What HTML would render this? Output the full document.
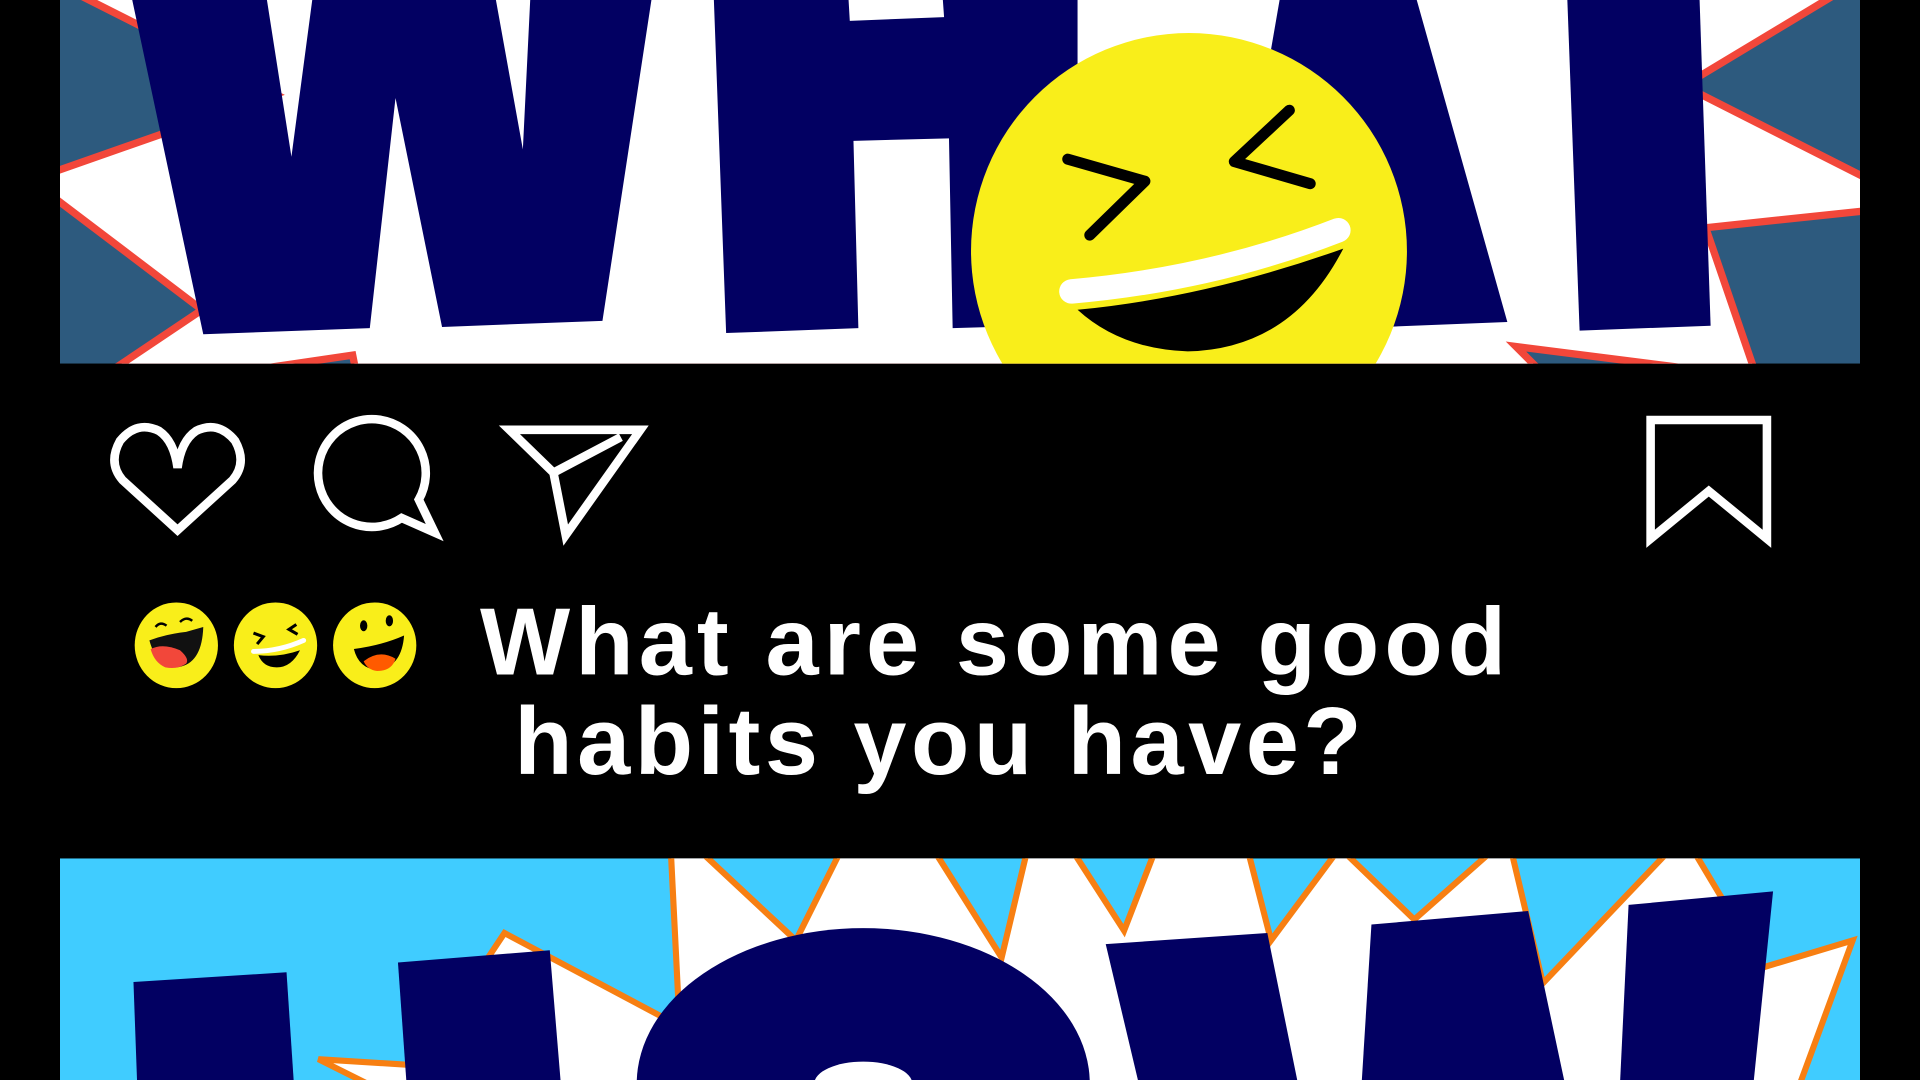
<!DOCTYPE html>
<html><head><meta charset="utf-8"><style>html,body{margin:0;padding:0;background:#000;overflow:hidden;width:1920px;height:1080px}svg{display:block}</style></head>
<body>
<svg width="1920" height="1080" viewBox="0 0 1568 882" preserveAspectRatio="none" xmlns="http://www.w3.org/2000/svg">
<defs>
<clipPath id="top"><rect x="49" y="0" width="1470" height="297"/></clipPath>
<clipPath id="bot"><rect x="49" y="701" width="1470" height="181"/></clipPath>
</defs>
<rect width="1568" height="882" fill="#000"/>
<g clip-path="url(#top)">
<rect x="49" y="0" width="1470" height="297" fill="#2d5a7e"/>
<polygon points="53,-10 1508,-10 1375,70 1525,146 1525,172 1393,186 1432,300 1372,300 1238,283 1255,300 290,300 288,290 220,300 95,300 165,253 45,162 45,140 225,77" fill="#fff" stroke="#f2473a" stroke-width="6" stroke-linejoin="miter"/>
<polygon points="108,0 218,0 238,128 255,0 405,0 427,122 433,0 532,0 492,262 361,267 323,80 302,268 166,273" fill="#020062"/>
<polygon points="583,0 693,0 694,17 771,14 770,0 880,0 880,265 778,268 775,113 697,115 701,268 593,272" fill="#020062"/>
<polygon points="1045,0 1157,0 1231,263 1130,267 1000,260" fill="#020062"/>
<polygon points="1280,0 1388,0 1397,266 1290,270" fill="#020062"/>
<circle cx="971" cy="205" r="178" fill="#f9ee1a"/>
<polyline points="872,130 935,148 890,192" fill="none" stroke="#000" stroke-width="9" stroke-linecap="round" stroke-linejoin="round"/>
<polyline points="1053,90 1008,132 1070,150" fill="none" stroke="#000" stroke-width="9" stroke-linecap="round" stroke-linejoin="round"/>
<path d="M880,253 Q985,243 1097,203 Q1055,285 970,287 Q915,285 880,253Z" fill="#000"/>
<path d="M875,238 Q990,228 1093,188" fill="none" stroke="#fff" stroke-width="20" stroke-linecap="round"/>
</g>
<!-- icons -->
<path d="M145,433 L100,392 Q88,378 98,360 Q112,343 130,352 Q142,360 145,382 Q148,360 160,352 Q178,343 192,360 Q202,378 190,392 Z" fill="none" stroke="#fff" stroke-width="7" stroke-linejoin="miter"/>
<path d="M328,423 A44,44 0 1 1 342,408 L355,435 Z" fill="none" stroke="#fff" stroke-width="7" stroke-linejoin="miter"/>
<path d="M416,351 L523,351 L462,437 L452,386 Z M452,386 L507,357" fill="none" stroke="#fff" stroke-width="7" stroke-linejoin="miter"/>
<path d="M1348,343 L1443,343 L1443,440 L1395.5,401 L1348,440 Z" fill="none" stroke="#fff" stroke-width="7" stroke-linejoin="miter"/>
<!-- emojis -->
<g>
<ellipse cx="144" cy="527" rx="34" ry="35" fill="#f9ee1a"/>
<path d="M152,516 Q135,518 122,523 Q128,545 144,545 Q165,543 166,512Z" fill="#111"/>
<path d="M123,530 Q133,525 147,531 Q155,538 152,542 Q145,547 135,545 Q126,541 123,530Z" fill="#f2473a"/>
<path d="M127,512 Q131,507 136,511 M147,508 Q152,503 157,507" stroke="#000" stroke-width="2" fill="none"/>
<ellipse cx="225" cy="527" rx="34" ry="35" fill="#f9ee1a"/>
<polyline points="207,517 215,520 210,526" fill="none" stroke="#000" stroke-width="2.5"/>
<polyline points="242,510 236,514 243,518" fill="none" stroke="#000" stroke-width="2.5"/>
<path d="M211,535 Q228,537 245,531 Q238,545 226,545 Q215,545 211,535Z" fill="#000"/>
<path d="M207,532 Q228,532 248,523" stroke="#fff" stroke-width="4" fill="none" stroke-linecap="round"/>
<ellipse cx="306" cy="527" rx="34" ry="35" fill="#f9ee1a"/>
<ellipse cx="297" cy="511" rx="3" ry="4.5" fill="#000"/>
<ellipse cx="318" cy="507" rx="3" ry="4.5" fill="#000"/>
<path d="M289,530 Q312,527 330,519 Q328,545 308,547 Q293,546 289,530Z" fill="#000"/>
<path d="M297,540 Q310,530 323,538 Q320,548 308,548 Q300,547 297,540Z" fill="#ff5a00"/>
</g>
<text x="392" y="551" font-family="'Liberation Sans',sans-serif" font-weight="bold" font-size="78" fill="#fff" textLength="838" lengthAdjust="spacing">What are some good</text>
<text x="420" y="632" font-family="'Liberation Sans',sans-serif" font-weight="bold" font-size="78" fill="#fff" textLength="692" lengthAdjust="spacing">habits you have?</text>
<!-- bottom -->
<g clip-path="url(#bot)">
<rect x="49" y="701" width="1470" height="181" fill="#40ccff"/>
<polygon points="548,698 575,698 650,768 685,698 765,698 818,782 838,698 878,698 918,760 942,698 1020,698 1038,768 1090,698 1100,698 1155,751 1215,698 1235,698 1260,803 1360,698 1385,698 1440,790 1513,768 1470,885 300,885 260,865 340,870 412,762 555,838" fill="#fff" stroke="#f77f12" stroke-width="5"/>
<polygon points="109,802 234,794 240,885 112,885" fill="#020062"/>
<polygon points="325,786 449,776 458,885 332,885" fill="#020062"/>
<ellipse cx="705" cy="885" rx="185" ry="127" fill="#020062"/>
<ellipse cx="705" cy="885" rx="40" ry="18" fill="#fff"/>
<polygon points="903,771 1035,762 1060,885 930,885" fill="#020062"/>
<polygon points="1120,755 1248,744 1278,885 1112,885" fill="#020062"/>
<polygon points="1330,739 1448,728 1432,885 1323,885" fill="#020062"/>
</g>
</svg>
</body></html>
